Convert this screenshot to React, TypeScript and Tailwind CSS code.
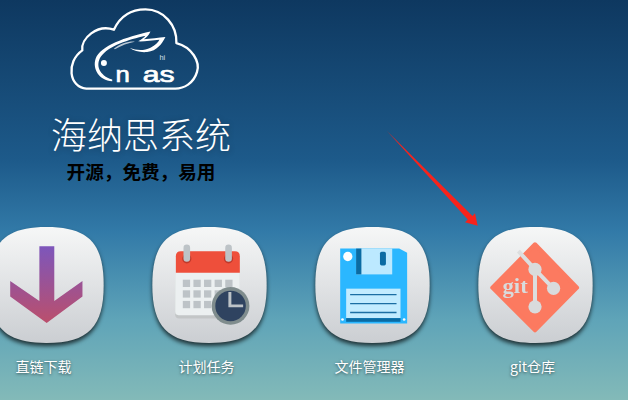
import React from 'react';

const SQUIRCLE = 'M172 0 C300 0 345 50 345 175 C345 300 300 350 172 350 C45 350 0 300 0 175 C0 50 45 0 172 0Z';

function Tile({ id, children }: { id: string; children: React.ReactNode }) {
  return (
    <svg
      viewBox="0 0 345 350"
      className="w-[115px] h-[116px] overflow-visible drop-shadow-[0_3px_2px_rgba(0,0,0,0.7)]"
    >
      <defs>
        <linearGradient id={`tile-${id}`} x1="0" y1="0" x2="0" y2="1">
          <stop offset="0" stopColor="#f6f7f7" />
          <stop offset="1" stopColor="#cbced2" />
        </linearGradient>
        <linearGradient id="purple" x1="0" y1="0" x2="0" y2="1">
          <stop offset="0" stopColor="#7d56bb" />
          <stop offset="1" stopColor="#bb4f6c" />
        </linearGradient>
      </defs>
      <path d={SQUIRCLE} fill={`url(#tile-${id})`} />
      {children}
    </svg>
  );
}

function DownloadIcon() {
  return (
    <Tile id="dl">
      <g transform="translate(33,-22)">
        <path
          d="M118 80H163V245L248 185V232L140 312L30 232V185L118 245Z"
          fill="url(#purple)"
        />
      </g>
    </Tile>
  );
}

function CalendarIcon() {
  const cols = [548, 580, 612, 644, 676];
  const rows = [181, 213, 245];
  return (
    <Tile id="cal">
      <g transform="translate(-456,-22)">
        <rect x="525" y="150" width="195" height="148" rx="12" fill="#c3c6c7" />
        <rect x="525" y="150" width="195" height="138" rx="10" fill="#ecf0f1" />
        <path d="M542 95H705Q720 95 720 110V160H527V110Q527 95 542 95Z" fill="#ee4f3b" />
        <circle cx="560" cy="118" r="14" fill="#c0392b" />
        <circle cx="686" cy="118" r="14" fill="#c0392b" />
        <rect x="550" y="75" width="20" height="52" rx="10" fill="#bdc3c7" />
        <rect x="676" y="75" width="20" height="52" rx="10" fill="#bdc3c7" />
        {rows.map((y) =>
          cols.map((x) => <rect key={`${x}-${y}`} x={x} y={y} width="22" height="22" fill="#bdc3c7" />),
        )}
        <circle cx="692" cy="260" r="57" fill="#7f8c8d" />
        <circle cx="692" cy="260" r="46" fill="#2f4360" />
        <path d="M690 218V260H730" fill="none" stroke="#bdc3c7" strokeWidth="9" />
      </g>
    </Tile>
  );
}

function FloppyIcon() {
  return (
    <Tile id="floppy">
      <g transform="translate(-45,-22)">
        <path d="M120 87H298L322 100V313H120Z" fill="#2bb7ff" />
        <rect x="168" y="87" width="109" height="78" fill="#bce9ff" />
        <rect x="168" y="87" width="16" height="78" fill="#0a6ba3" />
        <rect x="240" y="97" width="18" height="41" rx="5" fill="#0a6ba3" />
        <circle cx="143" cy="111" r="14" fill="#ffffff" />
        <rect x="138" y="208" width="164" height="89" fill="#c2ecff" />
        <rect x="138" y="297" width="164" height="11" fill="#0a6ba3" />
        <path d="M150 226H290M150 253H290M150 280H290" stroke="#1b6ea3" strokeWidth="4" />
        <circle cx="127" cy="301" r="4" fill="#ffffff" />
        <circle cx="313" cy="301" r="4" fill="#ffffff" />
      </g>
    </Tile>
  );
}

function GitIcon() {
  return (
    <Tile id="git">
      <g transform="translate(-534,-22)">
        <path
          d="M705 74L832 205L705 334L576 205Z"
          fill="#fc7a60"
          stroke="#fc7a60"
          strokeWidth="12"
          strokeLinejoin="round"
        />
        <path d="M655 95L705 150L760 207M705 150V262" fill="none" stroke="#dcdedf" strokeWidth="12" />
        <circle cx="705" cy="150" r="20" fill="#d9dbdc" />
        <circle cx="761" cy="207" r="20" fill="#d9dbdc" />
        <circle cx="705" cy="263" r="20" fill="#d9dbdc" />
        <text
          x="607"
          y="220"
          fill="#d9dbdc"
          fontSize="66"
          fontWeight="700"
          textLength="76"
          lengthAdjust="spacingAndGlyphs"
          fontFamily="'Liberation Serif', serif"
        >
          git
        </text>
      </g>
    </Tile>
  );
}

function Logo() {
  return (
    <svg viewBox="60 20 400 255" className="w-[133px] h-[85px] ml-[-11px]" fill="none" stroke="#ffffff">
      <path
        d="M112 265C60 262 50 185 100 150C95 115 145 70 195 88C215 45 250 27 290 27C345 27 385 75 383 128C430 140 455 185 445 215C435 250 405 265 380 265Z"
        strokeWidth="7"
        strokeLinejoin="round"
      />
      <path
        d="M190 243C150 240 130 205 140 175C155 135 230 110 305 93C300 105 292 112 285 117C305 115 330 112 350 110C340 130 325 152 295 155C275 157 255 152 243 143C262 150 285 152 305 142C320 135 328 125 332 118C310 120 285 124 268 123C278 117 285 112 290 106C240 118 180 135 155 170C140 195 150 225 190 238Z"
        fill="#ffffff"
        stroke="none"
      />
      <path d="M195 145C215 130 240 122 258 124C238 128 218 135 198 147Z" fill="#ffffff" stroke="none" opacity="0.7" />
      <circle cx="165" cy="188" r="9" fill="#ffffff" stroke="none" />
      <text x="332" y="179" fontSize="22" fill="#d8e2ea" stroke="none" fontFamily="'Liberation Sans', sans-serif">hi</text>
      <g fill="#ffffff" stroke="#ffffff" strokeWidth="2" fontFamily="'Liberation Sans', sans-serif">
        <text x="200" y="246" fontSize="68" textLength="43" lengthAdjust="spacingAndGlyphs">n</text>
        <text x="282" y="246" fontSize="68" textLength="96" lengthAdjust="spacingAndGlyphs">as</text>
      </g>
    </svg>
  );
}

const apps = [
  { label: '直链下载', icon: <DownloadIcon /> },
  { label: '计划任务', icon: <CalendarIcon /> },
  { label: '文件管理器', icon: <FloppyIcon /> },
  { label: 'git仓库', icon: <GitIcon /> },
];

export default function App() {
  return (
    <div className="relative w-[628px] h-[400px] overflow-hidden bg-[linear-gradient(180deg,#0e3860_0%,#1d5a8a_40%,#327aa8_58%,#5fa4b8_80%,#83bab8_100%)] font-['Noto_Sans_CJK_SC','Noto_Sans',sans-serif]">
      {/* Header */}
      <div className="w-[282px] pt-[7px] flex flex-col items-center">
        <Logo />
        <h1 className="mt-[16px] text-[36px] leading-[50px] font-light text-white [text-shadow:0_1px_6px_rgba(0,0,0,0.3)]">
          海纳思系统
        </h1>
        <p className="mt-0 text-[18.6px] leading-[26px] font-bold text-black">开源，免费，易用</p>
      </div>

      {/* App tiles */}
      <div className="mt-[43px] ml-[-11px] flex gap-[48px]">
        {apps.map((app) => (
          <div key={app.label} className="w-[115px] flex flex-col items-center">
            {app.icon}
            <span className="mt-[13px] ml-[-6px] text-[14px] leading-[20px] text-white [text-shadow:0_1px_3px_rgba(0,0,0,0.55)]">
              {app.label}
            </span>
          </div>
        ))}
      </div>

      {/* Annotation arrow */}
      <svg className="absolute left-0 top-0 w-[628px] h-[400px] pointer-events-none" viewBox="0 0 628 400">
        <polygon
          points="386.7,130.7 472.5,216 475,213.3 477.7,225.7 465,222.3 467.8,219.6"
          fill="#f8231c"
        />
      </svg>
    </div>
  );
}
